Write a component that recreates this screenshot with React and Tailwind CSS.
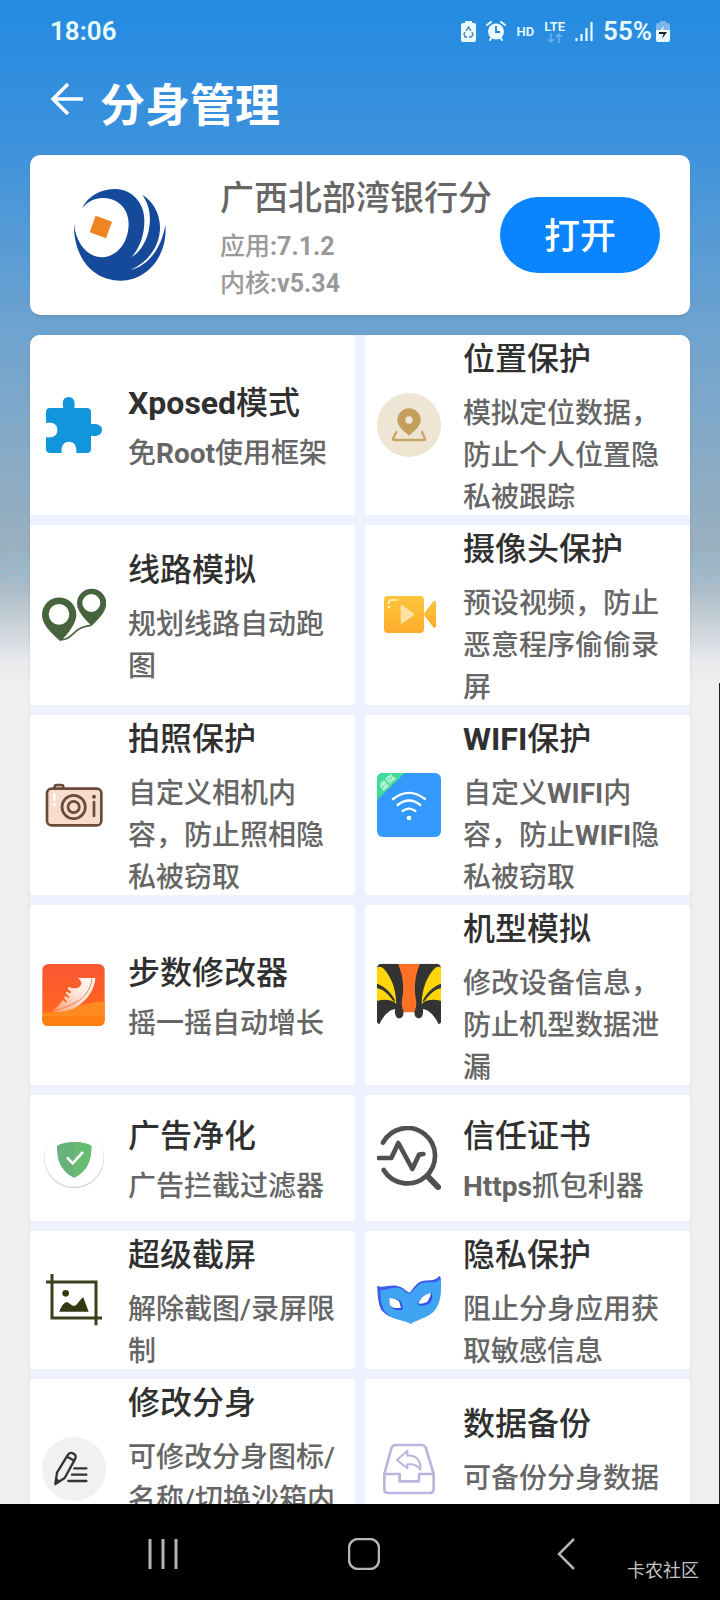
import { useState } from "react";

const PuzzleIcon = () => (
  <svg viewBox="126 189 192 192" className="size-16">
    <path
      fill="#1296db"
      d="M150 234H190C185 212 192 201 206 201S227 212 223 234H260Q273 234 273 246V283C294 279 306 287 306 300S294 321 273 317V357Q273 369 261 369H229C231 346 222 335 207 335S183 346 185 369H151Q138 369 138 357V322C162 324 172 316 172 300S162 276 138 279V246Q138 234 150 234Z"
    />
  </svg>
);

const LocationIcon = () => (
  <svg viewBox="51 189 192 192" className="size-16">
    <defs>
      <linearGradient id="loc" x1="0" y1="0" x2="0" y2="1">
        <stop offset="0" stopColor="#efe6d8" />
        <stop offset="1" stopColor="#ede5cf" />
      </linearGradient>
    </defs>
    <circle cx="147" cy="285" r="96" fill="url(#loc)" />
    <path
      d="M109 306L99 326Q98 330 102 330H192Q197 330 195 326L186 306"
      fill="none"
      stroke="#c9a468"
      strokeWidth="7"
      strokeLinecap="round"
    />
    <path
      fill="#c2a05b"
      fillRule="evenodd"
      d="M147 317C140 310 112 292 112 270A35 35 0 0 1 182 270C182 292 154 310 147 317ZM147 259A11 11 0 1 0 147 281A11 11 0 1 0 147 259Z"
    />
  </svg>
);

const RouteIcon = () => (
  <svg viewBox="126 759 192 192" className="size-16">
    <g fill="#47633d" fillRule="evenodd">
      <path d="M182 934C168 920 126 890 126 854A51 51 0 0 1 229 854C229 880 205 910 182 934ZM177 822A31 31 0 1 0 177 884A31 31 0 1 0 177 822Z" />
      <path d="M275 888C262 874 231 848 231 820A44 44 0 0 1 319 820C319 848 288 874 275 888ZM274 792A27 27 0 1 0 274 846A27 27 0 1 0 274 792Z" />
    </g>
    <path
      d="M186 929C205 930 218 912 230 902S256 888 273 886"
      fill="none"
      stroke="#47633d"
      strokeWidth="5"
    />
  </svg>
);

const VideoIcon = () => (
  <svg viewBox="51 759 192 192" className="size-16">
    <defs>
      <linearGradient id="cam" x1="0" y1="0" x2="0" y2="1">
        <stop offset="0" stopColor="#fac53c" />
        <stop offset="1" stopColor="#ffab2b" />
      </linearGradient>
    </defs>
    <rect x="72" y="798" width="120" height="111" rx="12" fill="url(#cam)" />
    <path
      d="M194 848L220 814Q228 808 228 820V886Q228 898 220 892L194 858Q191 853 194 848Z"
      fill="url(#cam)"
    />
    <path d="M122 826Q122 822 127 826L160 850Q164 853 160 857L127 880Q122 883 122 878Z" fill="#fde3a3" />
    <path d="M86 820Q84 810 96 810H110" fill="none" stroke="#fff3c9" strokeWidth="5" strokeLinecap="round" />
    <circle cx="87" cy="831" r="4" fill="#fff3c9" />
  </svg>
);

const CameraIcon = () => (
  <svg viewBox="126 219 192 192" className="size-16">
    <g fill="#f8dccd" stroke="#6a4a3c" strokeWidth="8">
      <path d="M164 266V261Q164 255 170 255H184Q190 255 190 261V266" />
      <rect x="141" y="266" width="163" height="110" rx="14" />
      <circle cx="221" cy="321" r="35" />
      <circle cx="221" cy="321" r="17" />
      <path d="M282 306V348" strokeLinecap="round" />
    </g>
    <circle cx="282" cy="290" r="6" fill="#6a4a3c" />
    <path d="M163 283V314" stroke="#fff" strokeWidth="7" strokeLinecap="round" strokeDasharray="16 12" />
  </svg>
);

const WifiIcon = () => (
  <svg viewBox="51 219 192 192" className="size-16">
    <rect x="51" y="219" width="192" height="192" rx="18" fill="#3399ff" />
    <path d="M69 219H134L51 300V237Q51 219 69 219Z" fill="#3fdc97" />
    <text
      x="82"
      y="256"
      transform="rotate(-44 82 248)"
      textAnchor="middle"
      fontSize="27"
      fontWeight="700"
      fill="#c9f7e2"
    >
      虚拟
    </text>
    <g fill="none" stroke="#fff" strokeWidth="7" strokeLinecap="round">
      <path d="M99 297Q147 260 195 297" />
      <path d="M113 315Q147 288 181 315" />
      <path d="M128 333Q147 319 166 333" />
    </g>
    <circle cx="147" cy="354" r="7" fill="#fff" />
  </svg>
);

const StepsIcon = () => (
  <svg viewBox="126 789 192 192" className="size-16">
    <defs>
      <linearGradient id="step" x1="0" y1="0" x2="0" y2="1">
        <stop offset="0" stopColor="#fb5634" />
        <stop offset="0.7" stopColor="#ff6420" />
        <stop offset="1" stopColor="#ff6f10" />
      </linearGradient>
      <linearGradient id="shoe" x1="1" y1="0" x2="0" y2="1">
        <stop offset="0" stopColor="#ffffff" />
        <stop offset="0.5" stopColor="#fde0d4" />
        <stop offset="1" stopColor="#fd9c6c" />
      </linearGradient>
    </defs>
    <rect x="127" y="792" width="187" height="186" rx="18" fill="url(#step)" />
    <path d="M127 938C190 940 240 908 314 904V948H127Z" fill="#ff8a20" />
    <path d="M127 948H314V960Q314 978 296 978H145Q127 978 127 960Z" fill="#ff7f12" />
    <path
      fill="url(#shoe)"
      d="M234 834L286 834C284 866 264 898 234 918C208 934 178 938 156 934C170 924 182 910 189 900L198 908L201 905L192 893L195 888L206 894L209 891L197 880L199 875L211 880L214 876L203 866L206 860C224 870 244 864 244 848C243 841 238 838 234 834Z"
    />
    <path d="M276 836C273 864 257 890 229 906C204 920 182 928 160 932" fill="none" stroke="#ff7a48" strokeWidth="3" />
  </svg>
);

const TigerIcon = () => (
  <svg viewBox="51 789 192 192" className="size-16">
    <defs>
      <clipPath id="tiger">
        <rect x="51" y="791" width="192" height="188" rx="14" />
      </clipPath>
    </defs>
    <g clipPath="url(#tiger)">
      <rect x="51" y="791" width="192" height="188" fill="#fff" />
      <path d="M112 791H182L166 850L174 937H120L128 850Z" fill="#ff7226" />
      <g id="tiger-half">
        <path d="M51 791H114C128 822 134 862 126 900C124 914 126 922 130 934C132 946 127 954 119 955C109 956 103 946 105 927C86 930 70 948 58 973L51 968Z" fill="#333" />
        <path d="M51 802Q58 798 68 803C92 826 108 864 109 912C98 900 74 896 51 903Z" fill="#ffd60a" />
        <path d="M51 851C76 860 98 882 107 906L98 901C86 882 68 868 51 864Z" fill="#333" />
      </g>
      <use href="#tiger-half" transform="matrix(-1 0 0 1 294 0)" />
    </g>
  </svg>
);

const ShieldIcon = () => (
  <svg viewBox="126 108 192 192" className="size-16">
    <circle cx="222" cy="205" r="90" fill="#cfcfcf" />
    <circle cx="222" cy="203" r="89" fill="#f1f1f1" />
    <circle cx="222" cy="201" r="88" fill="#fff" />
    <path d="M222 156C242 156 260 160 274 167C275 210 262 244 222 263C182 244 170 210 171 167C184 160 202 156 222 156Z" fill="#67b279" />
    <path d="M222 156C242 156 260 160 274 167C275 210 262 244 222 263Z" fill="#68bc71" />
    <path d="M201 202L218 220L249 186" fill="none" stroke="#fff" strokeWidth="8" />
  </svg>
);

const InspectIcon = () => (
  <svg viewBox="51 108 192 192" className="size-16">
    <g fill="none" stroke="#505050" strokeWidth="14" strokeLinecap="round" strokeLinejoin="round">
      <path d="M69 158A83 83 0 1 1 71 240" />
      <path d="M57 204H94L115 159L157 237L177 194L190 192" />
      <path d="M206 262L234 291" strokeWidth="18" />
    </g>
  </svg>
);

const CropImageIcon = () => (
  <svg viewBox="126 534 192 192" className="size-16">
    <g fill="none" stroke="#3a401c" strokeWidth="9">
      <path d="M156 552V684H306" />
      <path d="M138 576H288V706" />
    </g>
    <circle cx="197" cy="610" r="10" fill="#323a14" />
    <path d="M178 665C182 652 190 638 200 636C208 638 216 648 223 648C234 644 238 630 250 622C256 640 262 654 266 665Z" fill="#323a14" />
  </svg>
);

const MaskIcon = () => (
  <svg viewBox="51 534 192 192" className="size-16">
    <path
      fill="#3f5bea"
      d="M51 588C72 596 96 578 124 592C134 598 142 606 149 608C160 596 168 580 184 574C206 568 224 576 238 558L242 562C244 600 242 640 220 664L150 692C110 690 80 680 64 660C52 636 54 612 51 588Z"
    />
    <path
      fill="#3fa5f2"
      d="M60 600C82 602 100 588 124 596C134 603 142 611 150 612C162 600 172 584 188 579C206 573 226 584 242 567C245 610 242 640 222 664C204 684 168 690 152 702C138 690 102 694 80 670C60 648 64 624 60 600Z"
    />
    <path d="M88 626Q106 622 122 632Q132 652 126 661Q96 662 89 644ZM216 608Q221 630 206 642Q184 652 172 642Q184 612 216 608Z" fill="#3552e8" />
    <path d="M88 625Q104 622 117 634L123 653Q98 658 89 644ZM213 609Q209 628 200 637Q186 643 175 640Q184 614 213 609Z" fill="#fff" />
  </svg>
);

const EditIcon = () => (
  <svg viewBox="126 201 192 192" className="size-16">
    <circle cx="222" cy="297" r="96" fill="#f1f1f1" />
    <g fill="none" stroke="#333" strokeWidth="7" strokeLinecap="round" strokeLinejoin="round">
      <path d="M166 342L171 308L204 254Q210 246 219 250Q230 256 226 266L194 324Z" />
      <path d="M201 260L221 271" />
      <path d="M223 295H259M216 314H259M205 333H259" />
    </g>
    <path d="M166 342L169 324L180 332Z" fill="#333" />
  </svg>
);

const BackupIcon = () => (
  <svg viewBox="51 201 192 192" className="size-16">
    <g fill="none" stroke="#bbb5dd" strokeWidth="8" strokeLinejoin="round">
      <path d="M73 312L94 235Q97 225 108 225H184Q195 225 198 235L221 312V358Q221 369 210 369H84Q73 369 73 358ZM73 312H119V334H177V312H221" />
      <path d="M111 270L142 242V257C170 255 184 274 181 299C172 284 160 281 142 283V295Z" strokeWidth="6" />
    </g>
  </svg>
);

const features = [
  { title: "Xposed模式", desc: "免Root使用框架", icon: PuzzleIcon },
  { title: "位置保护", desc: "模拟定位数据，防止个人位置隐私被跟踪", icon: LocationIcon, wrap: true },
  { title: "线路模拟", desc: "规划线路自动跑图", icon: RouteIcon, wrap: true },
  { title: "摄像头保护", desc: "预设视频，防止恶意程序偷偷录屏", icon: VideoIcon, wrap: true },
  { title: "拍照保护", desc: "自定义相机内容，防止照相隐私被窃取", icon: CameraIcon, wrap: true },
  { title: "WIFI保护", desc: "自定义WIFI内容，防止WIFI隐私被窃取", icon: WifiIcon, wrap: true },
  { title: "步数修改器", desc: "摇一摇自动增长", icon: StepsIcon },
  { title: "机型模拟", desc: "修改设备信息，防止机型数据泄漏", icon: TigerIcon, wrap: true },
  { title: "广告净化", desc: "广告拦截过滤器", icon: ShieldIcon },
  { title: "信任证书", desc: "Https抓包利器", icon: InspectIcon },
  { title: "超级截屏", desc: "解除截图/录屏限制", icon: CropImageIcon, wrap: true },
  { title: "隐私保护", desc: "阻止分身应用获取敏感信息", icon: MaskIcon, wrap: true },
  { title: "修改分身", desc: "可修改分身图标/名称/切换沙箱内", icon: EditIcon, wrap: true, size: "min-h-[126px]" },
  { title: "数据备份", desc: "可备份分身数据", icon: BackupIcon, wrap: true, size: "min-h-[84px]" },
];

// Latin runs are set bolder than the Chinese around them
const MixedText = ({ text }) =>
  text.split(/([A-Za-z0-9.:]+)/).map((part, index) =>
    index % 2 ? (
      <b key={index} className="font-bold">
        {part}
      </b>
    ) : (
      part
    )
  );

const FeatureCard = ({ title, desc, icon: Icon, wrap, size = "" }) => (
  <button
    type="button"
    className="flex min-h-[126px] items-center gap-[22px] rounded-[4px] bg-white pr-3 pl-3 text-left"
  >
    <span className="shrink-0">
      <Icon />
    </span>
    <span className="min-w-0 flex-1">
      <span className="block text-[32px] leading-[49px] font-medium text-[#303030]">
        <MixedText text={title} />
      </span>
      <span
        className={`block text-[28px] font-medium text-[#666] ${
          wrap ? "mt-[9px] -mb-1 leading-[42px]" : "mt-2 -mb-px leading-[36px]"
        } ${size}`}
      >
        <MixedText text={desc} />
      </span>
    </span>
  </button>
);

const StatusBar = () => (
  <div className="flex h-[62px] items-center pr-[50px] pl-[50px] text-[26px] leading-none font-semibold text-[#e8fbff]">
    <span className="flex-1">18:06</span>
    <svg viewBox="0 0 15 21" className="mr-[10px] h-[21px] w-[15px]">
      <path d="M4 0H11V2H13Q15 2 15 4V19Q15 21 13 21H2Q0 21 0 19V4Q0 2 2 2H4Z" fill="currentColor" />
      <path d="M5 10L7.500 6L10 10M11 11L12 14L10 16H8M6 16H4L3 13L4 11" fill="none" stroke="#4b7fae" strokeWidth="1.300" />
    </svg>
    <svg viewBox="0 0 20 20" className="mr-[11px] size-5">
      <circle cx="10" cy="10.500" r="8" fill="currentColor" />
      <path d="M1 4L5 1M19 4L15 1M4 19L6 16M16 19L14 16" stroke="currentColor" strokeWidth="2" strokeLinecap="round" />
      <path d="M10 5V11H14" fill="none" stroke="#2f7fc4" strokeWidth="1.800" />
    </svg>
    <span className="mr-[10px] text-[13px] leading-none">HD</span>
    <span className="mr-[10px] flex flex-col items-center text-[13px] leading-[13px]">
      LTE
      <svg viewBox="0 0 16 10" className="h-[10px] w-4">
        <path d="M4 0V9M1 6L4 9L7 6M12 10V1M9 4L12 1L15 4" fill="none" stroke="#6db1ee" strokeWidth="1.500" />
      </svg>
    </span>
    <svg viewBox="0 0 18 20" className="mr-[10px] h-5 w-[18px]">
      <path d="M1.500 20V17M6.500 20V13M11.500 20V7M16.500 20V1" stroke="currentColor" strokeWidth="2.200" />
    </svg>
    <span className="mr-1">55%</span>
    <svg viewBox="0 0 14 21" className="h-[21px] w-[14px]">
      <path d="M4 0H10V2H12Q14 2 14 4V9H0V4Q0 2 2 2H4Z" fill="#7db8ec" />
      <path d="M0 9H14V19Q14 21 12 21H2Q0 21 0 19Z" fill="currentColor" />
      <path d="M8 5L3 11H7L5 14H11V9H7Z" fill="#f3fcff" />
      <path d="M3 11H11L6 18L7.500 13H3Z" fill="#1b2430" />
    </svg>
  </div>
);

const BankLogo = () => (
  <svg viewBox="42 27 276 276" className="size-[92px] shrink-0">
    <path
      fill="#154a9a"
      d="M66 85C84 48 122 27 168 27C214 28 252 66 253 118C254 164 240 204 214 232C240 216 262 184 268 140C274 102 264 66 246 44C278 62 300 100 300 142C300 196 268 244 212 270C262 258 304 208 316 134C324 226 262 302 182 302C98 302 40 232 42 132C48 192 84 232 128 232C172 230 206 186 206 132C206 84 172 54 128 54C104 54 84 64 66 85Z"
    />
    <path d="M107 107L156 125L138 175L89 157Z" fill="#ef8420" />
  </svg>
);

const App = () => {
  const [opened, setOpened] = useState(false);

  return (
    <div className="relative flex h-screen flex-col overflow-hidden bg-[#efefef] font-['Roboto','Noto_Sans_CJK_SC',sans-serif]">
      <div className="relative min-h-0 flex-1 overflow-hidden bg-[linear-gradient(180deg,#238be2_0px,#3a91dc_130px,#6ea3cf_330px,#9bb0bf_550px,#adbdc8_590px,#cdd5db_630px,#e8eaec_660px,#efefef_685px)]">
        {/* speckled band where the header image fades out */}
        <svg className="absolute top-[551px] left-0 h-8 w-full" aria-hidden="true">
          <filter id="speckle" x="0" y="0" width="100%" height="100%">
            <feTurbulence type="fractalNoise" baseFrequency="0.35" numOctaves="2" seed="4" />
            <feColorMatrix values="0 0 0 0 0.26  0 0 0 0 0.5  0 0 0 0 0.72  5 0 0 0 -2.4" />
          </filter>
          <rect width="100%" height="100%" filter="url(#speckle)" opacity="0.7" />
        </svg>

        <div className="relative">
          <StatusBar />

          <header className="flex h-[84px] items-center gap-[17px] pl-[51px] text-white">
            <button type="button" aria-label="返回">
              <svg viewBox="0 0 32 42" className="h-[42px] w-8">
                <path d="M17 1L2 16L17 31M2 16H32" fill="none" stroke="currentColor" strokeWidth="3.500" />
              </svg>
            </button>
            <h1 className="pt-1 text-[45px] leading-none font-bold">分身管理</h1>
          </header>

          <main className="mt-[9px] space-y-5 px-[30px]">
            <section className="flex h-40 items-center rounded-[10px] bg-white pr-[30px] pl-11 shadow-sm">
              <BankLogo />
              <div className="ml-[54px] min-w-0 flex-1 pt-[5px] font-medium text-[#999]">
                <h2 className="mb-[6px] overflow-hidden text-[34px] leading-[48px] whitespace-nowrap text-[#666]">
                  广西北部湾银行分
                </h2>
                <p className="text-[25px] leading-[37px]">
                  <MixedText text="应用:7.1.2" />
                </p>
                <p className="text-[25px] leading-[37px]">
                  <MixedText text="内核:v5.34" />
                </p>
              </div>
              <button
                type="button"
                aria-pressed={opened}
                onClick={() => setOpened(!opened)}
                className="h-[76px] w-40 shrink-0 rounded-full bg-[#0a84ff] pt-1 text-[36px] font-medium text-white"
              >
                打开
              </button>
            </section>

            <section className="grid grid-cols-2 gap-[10px] overflow-hidden rounded-[10px] bg-[#edf2fe] shadow">
              {features.map((feature) => (
                <FeatureCard key={feature.title} {...feature} />
              ))}
            </section>
          </main>
        </div>

        <div className="absolute top-[683px] right-0 bottom-0 w-px bg-[#222]" />
      </div>

      <nav className="relative grid h-24 grid-cols-3 items-center justify-items-center bg-black pt-1 pr-[53px] pl-[62px] text-[#b4b4b4]">
        <button type="button" aria-label="最近任务">
          <svg viewBox="0 0 30 32" className="h-8 w-[30px]">
            <path d="M2 1V31M15 1V31M28 1V31" stroke="currentColor" strokeWidth="3" />
          </svg>
        </button>
        <button type="button" aria-label="主页">
          <svg viewBox="0 0 32 32" className="size-8">
            <rect x="1" y="1" width="30" height="30" rx="9" fill="none" stroke="currentColor" strokeWidth="2.500" />
          </svg>
        </button>
        <button type="button" aria-label="返回上一页">
          <svg viewBox="0 0 18 32" className="h-8 w-[18px]">
            <path d="M17 1L2 16L17 31" fill="none" stroke="currentColor" strokeWidth="2.500" />
          </svg>
        </button>
        <span className="absolute right-[21px] bottom-4 text-[18px] leading-[26px] text-[#c4c4c4]">
          卡农社区
        </span>
      </nav>
    </div>
  );
};

export default App;
